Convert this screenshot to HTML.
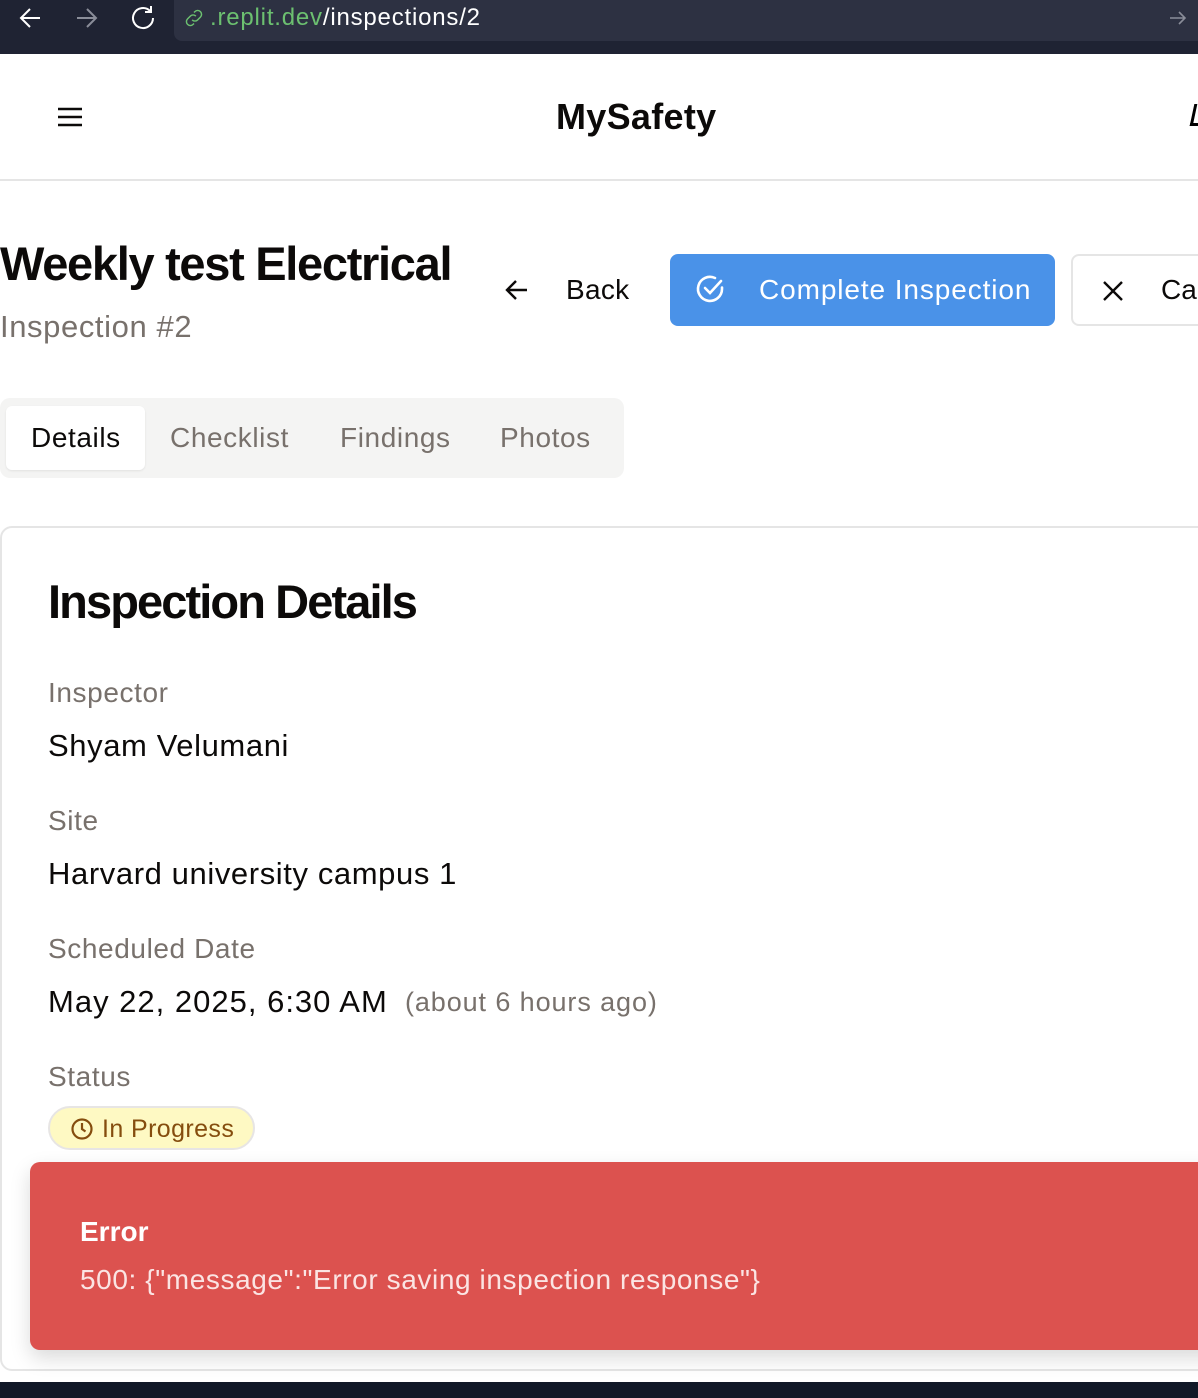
<!DOCTYPE html>
<html><head><meta charset="utf-8"><style>
*{margin:0;padding:0;box-sizing:border-box}
body{width:1198px;height:1398px;overflow:hidden;background:#fff;font-family:"Liberation Sans",sans-serif;position:relative;color:#0c0a09}
.a{position:absolute;white-space:nowrap}
.s{letter-spacing:0.6px}
</style></head><body>
<div class="a" style="left:0;top:0;width:1198px;height:54px;background:#1f2333"></div>
<div class="a" style="left:174px;top:0;width:1024px;height:41px;background:#2d3142;border-bottom-left-radius:8px"></div>
<svg class="a" style="left:18px;top:6px" width="26" height="24" viewBox="0 0 26 24" fill="none" stroke="#fff" stroke-width="2"><path d="M22 12H4M12 3l-9 9 9 9"/></svg>
<svg class="a" style="left:74px;top:6px" width="26" height="24" viewBox="0 0 26 24" fill="none" stroke="#8a8d99" stroke-width="2"><path d="M3 12h18M13 3l9 9-9 9"/></svg>
<svg class="a" style="left:128px;top:3px" width="30" height="30" viewBox="0 0 30 30" fill="none" stroke="#fff" stroke-width="2"><path d="M25 15a10 10 0 1 1-3-7.1"/><path d="M23 3v6h-6"/></svg>
<svg class="a" style="left:183px;top:7px" width="22" height="22" viewBox="0 0 24 24" fill="none" stroke="#6cc070" stroke-width="1.6"><path d="M10 14a4 4 0 0 0 6 0l3-3a4 4 0 0 0-6-6l-1 1M14 10a4 4 0 0 0-6 0l-3 3a4 4 0 0 0 6 6l1-1"/></svg>
<div class="a" style="left:210px;top:4px;font-size:24px;color:#fff;letter-spacing:0.8px"><span style="color:#6cc070">.replit.dev</span>/inspections/2</div>
<svg class="a" style="left:1168px;top:8px" width="20" height="20" viewBox="0 0 20 20" fill="none" stroke="#8a8d99" stroke-width="1.6"><path d="M2 10h15M11 4l6 6-6 6"/></svg>

<div class="a" style="left:0;top:179px;width:1198px;height:2px;background:#e5e5e5"></div>
<svg class="a" style="left:56px;top:104px" width="28" height="26" viewBox="0 0 28 26" stroke="#0c0a09" stroke-width="2.4"><path d="M2 5h24M2 13h24M2 21h24"/></svg>
<div class="a" style="left:556px;top:96px;font-size:36px;font-weight:bold;letter-spacing:0.3px">MySafety</div>
<div class="a" style="left:1192px;top:104px;width:14px;height:22px;border-left:3px solid #000;border-bottom:3px solid #000;transform:skewX(-12deg)"></div>

<div class="a" style="left:0;top:236px;font-size:47px;font-weight:bold;letter-spacing:-1.3px">Weekly test Electrical</div>
<div class="a s" style="left:0;top:309px;font-size:31px;color:#78716c">Inspection #2</div>

<svg class="a" style="left:504px;top:278px" width="26" height="24" viewBox="0 0 26 24" fill="none" stroke="#0c0a09" stroke-width="2.4"><path d="M23 12H3M12 3l-9 9 9 9"/></svg>
<div class="a" style="left:566px;top:274px;font-size:28px;letter-spacing:0.3px">Back</div>
<div class="a" style="left:670px;top:254px;width:385px;height:72px;background:#4a92e8;border-radius:8px"></div>
<svg class="a" style="left:694px;top:273px" width="32" height="32" viewBox="0 0 32 32" fill="none" stroke="#fff" stroke-width="2.6" stroke-linecap="round"><path d="M28 14.5V16A12 12 0 1 1 21 5"/><path d="M11 15l5 5 11-12"/></svg>
<div class="a" style="left:759px;top:274px;font-size:28px;color:#fff;letter-spacing:0.9px">Complete Inspection</div>
<div class="a" style="left:1071px;top:254px;width:160px;height:72px;border:2px solid #e5e5e5;border-radius:8px"></div>
<svg class="a" style="left:1101px;top:279px" width="24" height="24" viewBox="0 0 24 24" stroke="#0c0a09" stroke-width="2.4"><path d="M3 3l18 18M21 3L3 21"/></svg>
<div class="a" style="left:1161px;top:274px;font-size:28px">Ca</div>

<div class="a" style="left:0;top:398px;width:624px;height:80px;background:#f4f4f3;border-radius:10px"></div>
<div class="a" style="left:6px;top:406px;width:139px;height:64px;background:#fff;border-radius:6px;box-shadow:0 1px 2px rgba(0,0,0,.08)"></div>
<div class="a s" style="left:31px;top:422px;font-size:28px">Details</div>
<div class="a s" style="left:170px;top:422px;font-size:28px;color:#78716c">Checklist</div>
<div class="a s" style="left:340px;top:422px;font-size:28px;color:#78716c">Findings</div>
<div class="a s" style="left:500px;top:422px;font-size:28px;color:#78716c">Photos</div>

<div class="a" style="left:0;top:526px;width:1240px;height:845px;border:2px solid #e5e5e5;border-radius:12px"></div>
<div class="a" style="left:48px;top:574px;font-size:47px;font-weight:bold;letter-spacing:-1.9px">Inspection Details</div>
<div class="a s" style="left:48px;top:677px;font-size:28px;color:#78716c">Inspector</div>
<div class="a s" style="left:48px;top:728px;font-size:31px">Shyam Velumani</div>
<div class="a s" style="left:48px;top:805px;font-size:28px;color:#78716c">Site</div>
<div class="a s" style="left:48px;top:856px;font-size:31px">Harvard university campus 1</div>
<div class="a s" style="left:48px;top:933px;font-size:28px;color:#78716c">Scheduled Date</div>
<div class="a" style="left:48px;top:984px;font-size:31px;letter-spacing:1px">May 22, 2025, 6:30 AM</div>
<div class="a" style="left:405px;top:987px;font-size:27px;color:#78716c;letter-spacing:0.9px">(about 6 hours ago)</div>
<div class="a s" style="left:48px;top:1061px;font-size:28px;color:#78716c">Status</div>
<div class="a" style="left:48px;top:1106px;width:207px;height:44px;background:#fef9c3;border:2px solid #e7e5e4;border-radius:22px"></div>
<svg class="a" style="left:70px;top:1117px" width="24" height="24" viewBox="0 0 24 24" fill="none" stroke="#854d0e" stroke-width="2.2"><circle cx="12" cy="12" r="9.5"/><path d="M12 6v6l3.5 2.5"/></svg>
<div class="a" style="left:102px;top:1115px;font-size:25px;color:#854d0e;letter-spacing:0.4px">In Progress</div>

<div class="a" style="left:30px;top:1162px;width:1200px;height:188px;background:#dc524f;border-radius:10px;box-shadow:0 8px 20px rgba(0,0,0,.15)"></div>
<div class="a" style="left:80px;top:1216px;font-size:28px;font-weight:bold;color:#fff">Error</div>
<div class="a" style="left:80px;top:1264px;font-size:28px;color:#fbe4e3;letter-spacing:0.6px">500: {"message":"Error saving inspection response"}</div>

<div class="a" style="left:0;top:1382px;width:1198px;height:16px;background:#111827"></div>
</body></html>
